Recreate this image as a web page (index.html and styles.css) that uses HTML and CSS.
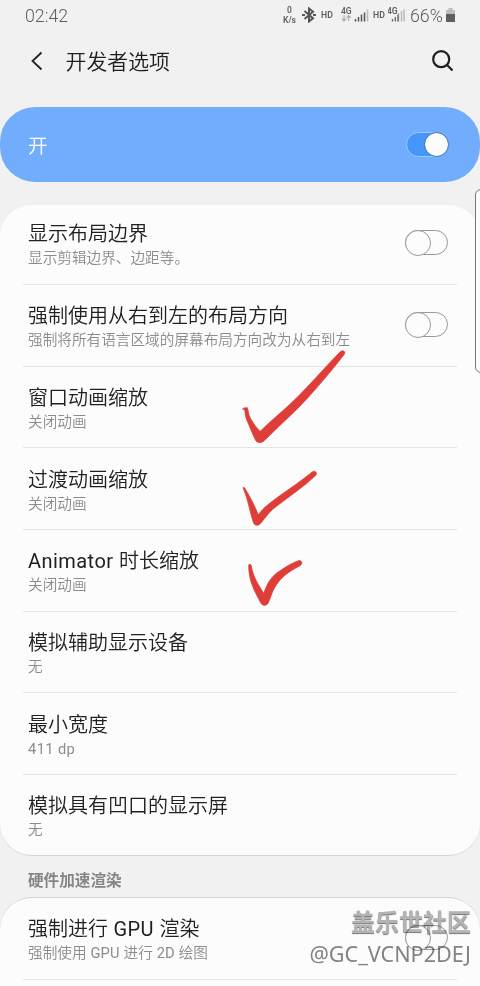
FILE: index.html
```html
<!DOCTYPE html>
<html lang="zh-CN">
<head>
<meta charset="utf-8">
<title>开发者选项</title>
<link rel="stylesheet" href="styles.css">
</head>
<body>
<div class="screen">
  <div class="statusbar">
    <span class="time">02:42</span>
    <div class="indicators">
      <span class="speed"><span>0</span><span>K/s</span></span>
      <svg class="bluetooth" width="14" height="16" viewBox="0 0 14 16"><path d="M2.500 4l8.500 7.300-4 3.200V1.500l4 3.200L2.500 12" fill="none" stroke="#555" stroke-width="2"/><path d="M0 8h3M11 8h3" stroke="#555" stroke-width="2.200"/></svg>
      <span class="hd hd-one">HD</span>
      <svg class="signal-one" width="28" height="16" viewBox="0 0 28 16">
        <text class="network" x="0" y="6.700">4G</text>
        <path d="M3 8.500v5.500M.8 11.700L3 14l2.200-2.300M7.700 14V8.500M5.500 10.800l2.200-2.300 2.200 2.300" fill="none" stroke="#aaa" stroke-width="1.100"/>
        <path d="M14.500 12v2.500M17.500 10v4.500M20.500 7.500v7M23.500 5.500v9" stroke="#555" stroke-width="1.500"/><path d="M26.500 2.500v12" stroke="#bbb" stroke-width="1.500"/>
      </svg>
      <span class="hd hd-two">HD</span>
      <svg class="signal-two" width="18" height="16" viewBox="0 0 18 16">
        <path d="M10.500 6v8.500M13.500 4v10.500M16 2.500v12" stroke="#bbb" stroke-width="1.500"/>
        <path d="M4.500 12v2.500M7.300 10v4.500M10 7.500v7" stroke="#666" stroke-width="1.300"/>
        <text class="network" x="-1" y="6.700">4G</text>
      </svg>
      <span class="percent">66%</span>
      <svg class="battery" width="9" height="14" viewBox="0 0 9 14"><path d="M2.500 0h4v2H9v4H0V2h2.500z" fill="#bbb"/><path d="M0 6h9v8H0z" fill="#5e5e5e"/></svg>
    </div>
  </div>

  <header class="appbar">
    <svg class="back" width="14" height="20" viewBox="0 0 14 20"><path d="M12.500 1.500L3.500 10l9 8.500" fill="none" stroke="#222" stroke-width="1.800"/></svg>
    <h1>开发者选项</h1>
    <svg class="search" width="24" height="24" viewBox="0 0 24 24"><circle cx="10.200" cy="10.200" r="8" fill="none" stroke="#1e1e1e" stroke-width="2.200"/><path d="M15.800 15.800l5.700 5.700" stroke="#1e1e1e" stroke-width="2.200"/></svg>
  </header>

  <section class="master"><span>开</span><span class="switch on"></span></section>

  <section class="card">
    <div class="row first"><div class="copy"><h2>显示布局边界</h2><p>显示剪辑边界、边距等。</p></div><span class="switch"></span></div>
    <div class="row"><div class="copy"><h2>强制使用从右到左的布局方向</h2><p>强制将所有语言区域的屏幕布局方向改为从右到左</p></div><span class="switch"></span></div>
    <div class="row"><div class="copy"><h2>窗口动画缩放</h2><p>关闭动画</p></div></div>
    <div class="row"><div class="copy"><h2>过渡动画缩放</h2><p>关闭动画</p></div></div>
    <div class="row"><div class="copy"><h2><span class="latin">Animator </span>时长缩放</h2><p>关闭动画</p></div></div>
    <div class="row"><div class="copy"><h2>模拟辅助显示设备</h2><p>无</p></div></div>
    <div class="row"><div class="copy"><h2>最小宽度</h2><p><span class="latin wide">411 dp</span></p></div></div>
    <div class="row"><div class="copy"><h2>模拟具有凹口的显示屏</h2><p>无</p></div></div>
  </section>

  <h3 class="section-title">硬件加速渲染</h3>

  <section class="card next">
    <div class="row first"><div class="copy"><h2>强制进行<span class="latin"> GPU </span>渲染</h2><p>强制使用<span class="latin"> GPU </span>进行<span class="latin"> 2D </span>绘图</p></div><span class="switch"></span></div>
    <div class="row"></div>
  </section>

  <div class="edge-handle"></div>

  <svg class="marks" width="120" height="270" viewBox="235 345 120 270">
    <g fill="#df3d38" stroke="#df3d38" stroke-width=".8" stroke-linejoin="round">
      <path d="M242.500 409.200Q243 407.400 247.300 407.700C248.500 411 248.500 415 250.500 418.500Q254 425 260 431.500C273 418.500 287 408 299 395.500C313 381.500 326 366 340.300 351.700C343 349.500 346 351.700 344.300 354.300C333 369 321 383 309 396.500C296 411 282 423 269.500 435.500L263.500 441.200C261 443.300 257.500 443 255.700 440.500C252 433 249.500 426 247 420.500C245 416 245.600 413 244.500 409.500Z"/>
      <path d="M243 487.800Q243.800 486.500 245 488.500C250 497 255 506 258.200 514.800C264 507 270 503 278 497C290 488.500 301 481 312.300 471.900C315.300 470 317.800 473 315.500 475.600C304 486.500 290 496 277.500 505.500C270 510.500 266 517 260.500 523.500C258.500 525.900 255 525.900 253.600 523C249 509 248 499 243 487.800Z"/>
      <path d="M248.700 565Q249.700 563 251.200 565.500C253 577 258.500 585 263.800 593.500C267 583 272 576 279 571.500C287 566 292 563 298.500 560.700C301.700 560 303.200 563.500 300.300 565.500C292 570 284 574.500 278.500 582C272 590 271.500 596 268.200 603C266.800 606 262.500 606 261 603.200C253.500 590 248.500 579 248.700 565Z"/>
    </g>
  </svg>

  <div class="watermark"><strong>盖乐世社区</strong><span>@GC_VCNP2DEJ</span></div>
</div>
</body>
</html>
```
FILE: styles.css
```css
*, *::before { box-sizing: border-box; }
body {
  margin: 0;
  background: #f1f1f1;
  color: #202020;
  font-family: Roboto, "Noto Sans CJK SC", sans-serif;
}
h1, h2, h3, p { margin: 0; font-weight: 400; white-space: nowrap; }
.screen { position: relative; width: 480px; height: 986px; overflow: hidden; background: #f1f1f1; }

.statusbar {
  display: flex;
  justify-content: space-between;
  align-items: center;
  height: 30px;
  padding: 0 25px;
  color: #5e5e5e;
}
.time { font-size: 17.8px; font-weight: 350; }
.indicators { display: flex; align-items: center; }
.speed {
  display: flex;
  flex-direction: column;
  align-items: center;
  width: 15px;
  margin-right: 5px;
  margin-left: -1px;
  font-size: 8.5px;
  line-height: 10px;
  font-weight: 600;
}
.bluetooth { margin-right: 5px; }
.hd { width: 13px; font-size: 8.7px; font-weight: 600; line-height: 14px; margin-top: -1px; }
.hd-one { margin-right: 7px; }
.hd-two { margin-right: 2px; margin-left: 4px; }
.network { font-size: 8.5px; font-weight: 600; fill: #5e5e5e; }
.percent { width: 33px; margin-left: 4px; font-size: 17.8px; font-weight: 350; white-space: nowrap; }
.battery { margin-left: 3px; }

.appbar { display: flex; align-items: center; height: 62px; padding: 0 25px 0 29px; }
.appbar h1 { flex: 1; margin: 2px 0 0 22.5px; font-size: 20.9px; line-height: 30px; font-weight: 350; }

.master {
  display: flex;
  align-items: center;
  justify-content: space-between;
  height: 75px;
  margin-top: 15px;
  padding: 0 31px 0 28px;
  border-radius: 35px;
  background: #71adfc;
  color: #fff;
  font-size: 19.5px;
  font-weight: 350;
}

.card {
  margin-top: 23px;
  padding: 0 23px;
  border-bottom: 1px solid #d4d4d4;
  border-radius: 32px;
  background: #fcfcfc;
}
.row {
  display: flex;
  align-items: flex-start;
  justify-content: space-between;
  height: 81.65px;
  padding: 18.3px 9px 0 5px;
  border-top: 1px solid #e4e4e4;
}
.row.first { height: 79px; padding-top: 15.4px; border-top-color: transparent; }
.row h2 { font-size: 20px; line-height: 26px; font-weight: 350; }
.row p { color: #8c8c8c; font-size: 14.65px; line-height: 22px; font-weight: 350; }
.latin { font-weight: 400; letter-spacing: .45px; }
p .latin { letter-spacing: .2px; }
p .wide { letter-spacing: .4px; }
.row .switch { margin-top: 8.6px; }

.switch {
  position: relative;
  width: 43px;
  height: 25px;
  border: 1px solid #999;
  border-radius: 13px;
}
.switch::before {
  content: "";
  position: absolute;
  top: -1px;
  left: -1px;
  width: 26px;
  height: 26px;
  border: 1px solid #999;
  border-radius: 50%;
  background: #fcfcfc;
}
.switch.on { border-color: #9ccbff; background: #4496fb; }
.switch.on::before { left: 17px; width: 25px; height: 25px; border-color: #2573bd; }

.section-title {
  height: 41px;
  padding-left: 28px;
  color: #858585;
  font-size: 15.6px;
  line-height: 51px;
  font-weight: 600;
}
.card.next {
  height: 110px;
  margin-top: 0;
  border-top: 1px solid #d4d4d4;
  border-bottom: 0;
  border-radius: 32px 32px 0 0;
}
.next .row.first { height: 81px; padding-top: 17px; }

.edge-handle {
  position: absolute;
  top: 189px;
  left: 475px;
  width: 12px;
  height: 184px;
  border: 1px solid #777;
  border-radius: 7px;
  background: #fcfcfc;
}
.marks { position: absolute; top: 345px; left: 235px; }
.watermark {
  position: absolute;
  right: 9px;
  bottom: 16px;
  display: flex;
  flex-direction: column;
  align-items: flex-end;
  color: #858585;
  mix-blend-mode: multiply;
}
.watermark strong {
  color: #b5b5b5;
  font-size: 24px;
  line-height: 29px;
  font-weight: 700;
  text-shadow: 0 1px 1px #777;
}
.watermark span {
  font-family: "Noto Sans", sans-serif;
  font-size: 21.6px;
  line-height: 32px;
}
```
